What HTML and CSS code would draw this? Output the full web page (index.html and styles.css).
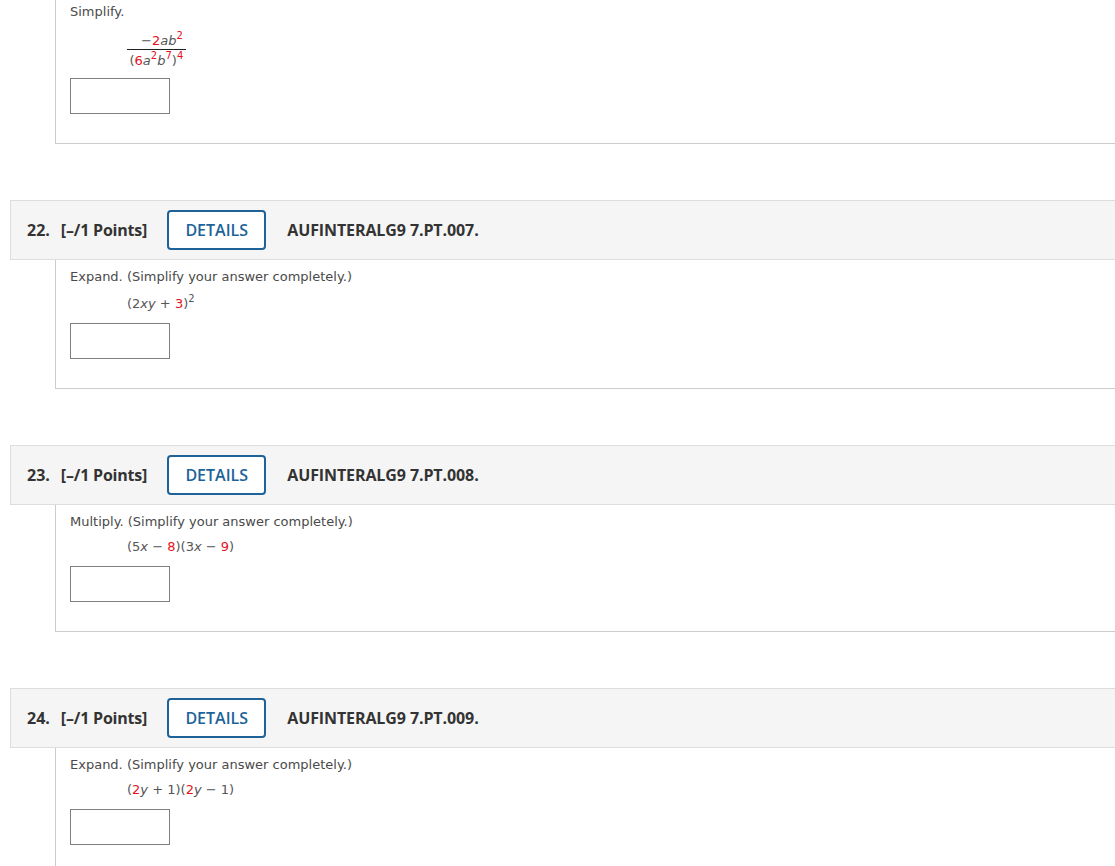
FILE: index.html
```html
<!DOCTYPE html>
<html lang="en">
<head>
    <meta charset="UTF-8">
    <title>Assignment</title>
    <link rel="stylesheet" href="styles.css">
</head>
<body>

<div class="page">

    <!-- 21 (scrolled, only its tail is visible) -->
    <div class="question">
        <div class="q-body partial">
            <p class="prompt">Simplify.</p>
            <div class="expr">
                <span class="frac">
                    <span class="num">&minus;<span class="hl">2</span><i>ab</i><sup class="hl">2</sup></span>
                    <span class="den">(<span class="hl">6</span><i>a</i><sup class="hl">2</sup><i>b</i><sup class="hl">7</sup>)<sup class="hl">4</sup></span>
                </span>
            </div>
            <input type="text" class="answer">
        </div>
    </div>

    <div class="question">
        <div class="q-head">
            <span class="q-num">22.</span>
            <span class="q-points">[&ndash;/1 Points]</span>
            <button class="details">DETAILS</button>
            <span class="q-code">AUFINTERALG9 7.PT.007.</span>
        </div>
        <div class="q-body">
            <p class="prompt">Expand. (Simplify your answer completely.)</p>
            <div class="expr raised">(2<i>xy</i> + <span class="hl">3</span>)<sup>2</sup></div>
            <input type="text" class="answer">
        </div>
    </div>

    <div class="question">
        <div class="q-head">
            <span class="q-num">23.</span>
            <span class="q-points">[&ndash;/1 Points]</span>
            <button class="details">DETAILS</button>
            <span class="q-code">AUFINTERALG9 7.PT.008.</span>
        </div>
        <div class="q-body">
            <p class="prompt">Multiply. (Simplify your answer completely.)</p>
            <div class="expr">(5<i>x</i> &minus; <span class="hl">8</span>)(3<i>x</i> &minus; <span class="hl">9</span>)</div>
            <input type="text" class="answer">
        </div>
    </div>

    <div class="question">
        <div class="q-head">
            <span class="q-num">24.</span>
            <span class="q-points">[&ndash;/1 Points]</span>
            <button class="details">DETAILS</button>
            <span class="q-code">AUFINTERALG9 7.PT.009.</span>
        </div>
        <div class="q-body">
            <p class="prompt">Expand. (Simplify your answer completely.)</p>
            <div class="expr">(<span class="hl">2</span><i>y</i> + 1)(<span class="hl">2</span><i>y</i> &minus; 1)</div>
            <input type="text" class="answer">
        </div>
    </div>

</div>

</body>
</html>
```

FILE: styles.css
```css
html, body {
    margin: 0;
    background: #fff;
    overflow-x: hidden;
}

.page {
    padding-left: 10px;
    margin-right: -20px;
    font-family: "DejaVu Sans", Verdana, sans-serif;
}

.question {
    margin-bottom: 56px;
}

/* header bar */
.q-head {
    display: flex;
    align-items: center;
    height: 58px;
    padding-left: 16px;
    background: #f5f5f5;
    border: 1px solid #ddd;
    border-right: none;
    font-family: "Open Sans", Arial, sans-serif;
    font-weight: 700;
    font-size: 16px;
    color: #333;
}

.q-num {
    margin-right: 11px;
}

.q-points {
    margin-right: 20px;
    letter-spacing: -0.2px;
}

.details {
    box-sizing: border-box;
    width: 99px;
    height: 40px;
    margin-right: 21px;
    padding: 0;
    background: #fff;
    border: 2px solid #1d6399;
    border-radius: 4px;
    color: #1d6399;
    font-family: "Open Sans", Arial, sans-serif;
    font-weight: 600;
    font-size: 16px;
}

.q-code {
    letter-spacing: -0.1px;
}

/* question body */
.q-body {
    margin-left: 45px;
    padding: 8px 0 29px 14px;
    border-left: 1px solid #ccc;
    border-bottom: 1px solid #ccc;
    color: #4a4a4a;
    font-size: 13px;
}

.q-body.partial {
    padding-top: 3px;
}

.prompt {
    margin: 0;
    line-height: 18px;
}

.expr {
    margin: 6px 0 9px 57px;
    line-height: 20px;
    color: #555;
}

.expr.raised {
    padding-top: 2px;
}

.expr sup {
    font-size: 10px;
    vertical-align: 6px;
    line-height: 0;
}

.hl {
    color: #e8101a;
}

.frac {
    display: inline-flex;
    flex-direction: column;
    align-items: center;
    margin-top: 5px;
}

.frac .num {
    padding: 0 4px 0 14px;
    line-height: 17px;
}

.frac .den {
    padding: 2px 3px 0 2px;
    border-top: 1px solid #222;
    line-height: 17px;
}

.answer {
    display: block;
    box-sizing: border-box;
    width: 100px;
    height: 36px;
    margin: 0;
    border: 1px solid #808080;
    background: #fff;
}
```
